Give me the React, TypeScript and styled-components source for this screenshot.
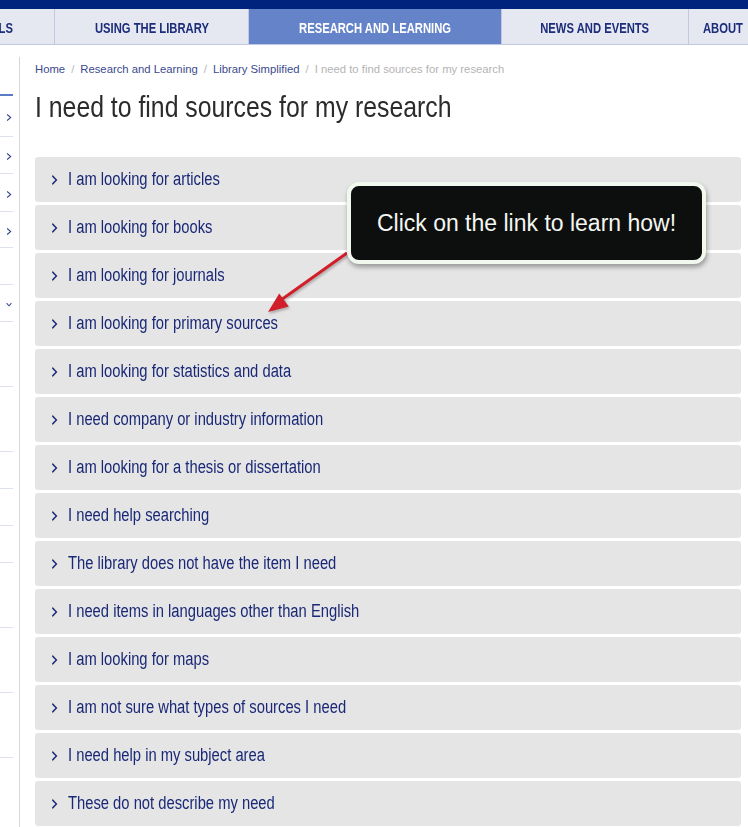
import styled, { createGlobalStyle } from 'styled-components'

const GlobalStyle = createGlobalStyle`
  html, body {
    margin: 0;
    padding: 0;
    background: #fff;
  }
  body {
    font-family: "Liberation Sans", Arial, sans-serif;
  }
`

// no narrow face is installed, so the condensed look comes from a horizontal squeeze
const Squeeze = styled.span<{ $origin?: string; $x?: number }>`
  display: inline-block;
  white-space: nowrap;
  transform: scaleX(${({ $x }) => $x ?? 0.83});
  transform-origin: ${({ $origin }) => $origin ?? 'left center'};
`

const tabs = [
  { label: 'ELECTRONIC TOOLS', width: 55, align: 'clip' },
  { label: 'USING THE LIBRARY', width: 194, align: 'center' },
  { label: 'RESEARCH AND LEARNING', width: 253, align: 'center', active: true },
  { label: 'NEWS AND EVENTS', width: 187, align: 'center' },
  { label: 'ABOUT', width: 80, align: 'start' },
] as const

const sideItems = [
  { h: 42, icon: 'right' },
  { h: 37, icon: 'right' },
  { h: 38, icon: 'right' },
  { h: 36, icon: 'right' },
  { h: 37 },
  { h: 37, icon: 'down' },
  { h: 65 },
  { h: 65 },
  { h: 37 },
  { h: 37 },
  { h: 37 },
  { h: 65 },
  { h: 65 },
  { h: 65 },
  { h: 65 },
]

const items = [
  'I am looking for articles',
  'I am looking for books',
  'I am looking for journals',
  'I am looking for primary sources',
  'I am looking for statistics and data',
  'I need company or industry information',
  'I am looking for a thesis or dissertation',
  'I need help searching',
  'The library does not have the item I need',
  'I need items in languages other than English',
  'I am looking for maps',
  'I am not sure what types of sources I need',
  'I need help in my subject area',
  'These do not describe my need',
]

function Chevron({ dir = 'right', w = 8, h = 8 }: { dir?: 'right' | 'down'; w?: number; h?: number }) {
  return (
    <svg width={w} height={h} viewBox="0 0 8 8" fill="none" preserveAspectRatio="none">
      {dir === 'right' ? (
        <polyline points="1.5,0.6 6.2,4 1.5,7.4" stroke="currentColor" strokeWidth="1.3" />
      ) : (
        <polyline points="0.8,2.5 4,5.5 7.2,2.5" stroke="currentColor" strokeWidth="1.2" />
      )}
    </svg>
  )
}

const origins = { clip: 'right center', center: 'center center', start: 'left center' }

export default function App() {
  return (
    <Page>
      <GlobalStyle />
      <TopBar />
      <Nav>
        {tabs.map((t) => (
          <Tab key={t.label} $w={t.width} $active={'active' in t} $align={t.align}>
            <Squeeze $origin={origins[t.align]} $x={0.76}>
              {t.label}
            </Squeeze>
          </Tab>
        ))}
      </Nav>

      <Main>
        <Sidebar>
          {sideItems.map((s, i) => (
            <SideItem key={i} $h={s.h} $first={i === 0}>
              {s.icon && <Chevron dir={s.icon as 'right' | 'down'} w={6} h={7} />}
            </SideItem>
          ))}
        </Sidebar>

        <Content>
          <Crumbs>
            <a>Home</a>
            <Sep>/</Sep>
            <a>Research and Learning</a>
            <Sep>/</Sep>
            <a>Library Simplified</a>
            <Sep>/</Sep>
            <Current>I need to find sources for my research</Current>
          </Crumbs>
          <Title>
            <Squeeze $x={0.827}>I need to find sources for my research</Squeeze>
          </Title>

          <Accordion>
            {items.map((label) => (
              <Row key={label}>
                <Chevron w={7} h={10} />
                <Squeeze $x={0.82}>{label}</Squeeze>
              </Row>
            ))}
          </Accordion>
        </Content>
      </Main>

      <Arrow width="90" height="70" viewBox="0 0 90 70">
        <line x1="86" y1="3" x2="20" y2="50" stroke="#d11f2a" strokeWidth="3" />
        <polygon points="7,62 18.2,43.6 27.8,56.4" fill="#d11f2a" />
      </Arrow>
      <Callout>Click on the link to learn how!</Callout>
    </Page>
  )
}

const Page = styled.div`
  position: relative;
  width: 748px;
  min-height: 827px;
  overflow: hidden;
`

const TopBar = styled.div`
  height: 9px;
  background: #00247d;
`

const Nav = styled.nav`
  display: flex;
  height: 35px;
  background: #e5e7f1;
  border-bottom: 1px solid #c4c8df;
`

const Tab = styled.div<{ $w: number; $active?: boolean; $align: 'clip' | 'center' | 'start' }>`
  flex: 0 0 ${({ $w }) => $w}px;
  display: flex;
  align-items: center;
  justify-content: ${({ $align }) =>
    $align === 'clip' ? 'flex-end' : $align === 'start' ? 'flex-start' : 'center'};
  padding: 2px ${({ $align }) => ($align === 'clip' ? '41px' : '0')} 0
    ${({ $align }) => ($align === 'start' ? '14px' : '0')};
  box-sizing: border-box;
  overflow: hidden;
  border-right: 1px solid #c4c8df;
  background: ${({ $active }) => ($active ? '#6483c8' : 'transparent')};
  color: ${({ $active }) => ($active ? '#ffffff' : '#1c2d7a')};
  font-weight: 700;
  font-size: 14.8px;

  span {
    flex-shrink: 0;
  }
`

const Main = styled.div`
  display: flex;
  align-items: flex-start;
`

const Sidebar = styled.aside`
  flex: 0 0 20px;
  margin-top: 12px;
  padding-top: 37px;
  border-right: 1px solid #d6d6d6;
  min-height: 770px;
  box-sizing: border-box;
`

const SideItem = styled.div<{ $h: number; $first?: boolean }>`
  width: 13px;
  height: ${({ $h }) => $h}px;
  box-sizing: border-box;
  border-top: ${({ $first }) => ($first ? '2px solid #5b7bc6' : '1px solid #dde0ef')};
  display: flex;
  align-items: center;
  justify-content: flex-end;
  padding: 3px 1px 0 0;
  color: #2b3c8c;
`

const Content = styled.main`
  flex: 1;
  padding: 16px 7px 0 15px;
`

const Crumbs = styled.div`
  font-size: 11.3px;
  color: #3b4a8d;
  line-height: 16px;
  white-space: nowrap;
`

const Sep = styled.span`
  color: #b8b8b8;
  margin: 0 6px 0 6px;
`

const Current = styled.span`
  color: #b4b4b4;
`

const Title = styled.h1`
  margin: 9px 0 0;
  font-weight: 400;
  font-size: 30px;
  line-height: 42px;
  color: #2b2b2b;
`

const Accordion = styled.div`
  margin-top: 29px;
  display: flex;
  flex-direction: column;
  gap: 3px;
`

const Row = styled.div`
  height: 45px;
  display: flex;
  align-items: center;
  gap: 10px;
  padding-left: 16px;
  background: #e5e5e5;
  border-radius: 3px;
  color: #1a2877;
  font-size: 18px;

  svg {
    flex-shrink: 0;
    margin-top: 1px;
  }
`

const Callout = styled.div`
  position: absolute;
  left: 347px;
  top: 182px;
  width: 351px;
  height: 74px;
  border: 4px solid #f1f8ee;
  border-radius: 12px;
  background: #0d0f0e;
  box-shadow: 1px 3px 5px rgba(0, 0, 0, 0.35);
  display: flex;
  align-items: center;
  justify-content: center;
  color: #f4f7f2;
  font-size: 23px;
`

const Arrow = styled.svg`
  position: absolute;
  left: 261px;
  top: 250px;
  filter: drop-shadow(1px 2px 1px rgba(0, 0, 0, 0.25));
`
